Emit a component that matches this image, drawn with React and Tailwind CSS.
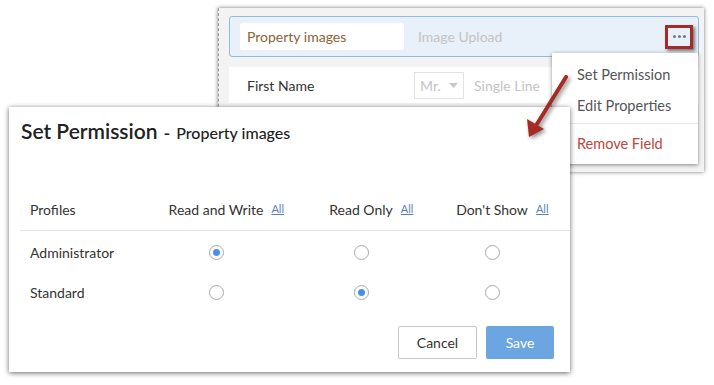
import React from "react";

const font = { fontFamily: "Lato, 'Open Sans', sans-serif" };

function Radio({ checked }) {
  return (
    <span className="w-[15px] h-[15px] rounded-full border border-[#a9a9a9] bg-white flex items-center justify-center">
      {checked && <span className="w-[7px] h-[7px] rounded-full bg-[#4a90e2]" />}
    </span>
  );
}

function ColHead({ label, width }) {
  return (
    <div className={`${width} flex justify-center`}>
      <span className="relative text-[14px] text-[#333]">
        {label}
        <a className="absolute left-full ml-[8px] top-[2px] text-[11px] text-[#5a7fc0] underline whitespace-nowrap">All</a>
      </span>
    </div>
  );
}

const rows = [
  { name: "Administrator", sel: 0 },
  { name: "Standard", sel: 1 },
];

const colW = ["w-[140px]", "w-[150px]", "w-[112px]"];

export default function App() {
  return (
    <div className="relative w-[714px] h-[385px] bg-white overflow-hidden" style={font}>
      {/* back panel: field list */}
      <div className="ml-[218px] mt-[8px] w-[486px] h-[164px] bg-[#f3f3f3] border-l border-dashed border-[#9a9a9a] shadow-[0_0_4px_rgba(0,0,0,0.55)] pl-[10px] pr-[5px] pt-[8px] flex flex-col gap-[10px]">
        <div className="h-[41px] rounded-[3px] border border-[#92b9e4] bg-[#e8f0f9] flex items-center pl-[10px] pr-[5px]">
          <div className="w-[164px] h-[27px] bg-white rounded-[2px] flex items-center pl-[7px] text-[14px] text-[#8a6337]">
            Property images
          </div>
          <span className="ml-[14px] text-[14px] text-[#c4c4c4]">Image Upload</span>
          <div className="ml-auto w-[28px] h-[24px] border-[3px] border-[#a52b27] shadow-[2px_2px_3px_rgba(0,0,0,0.5)] flex items-center justify-center gap-[2px]">
            <span className="w-[3px] h-[3px] rounded-full bg-[#777]" />
            <span className="w-[3px] h-[3px] rounded-full bg-[#777]" />
            <span className="w-[3px] h-[3px] rounded-full bg-[#777]" />
          </div>
        </div>
        <div className="h-[36px] bg-white flex items-center pl-[18px]">
          <span className="w-[167px] text-[14px] text-[#333]">First Name</span>
          <div className="w-[50px] h-[27px] border border-[#e3e3e3] flex items-center pl-[5px] gap-[8px] text-[14px] text-[#c4c4c4]">
            Mr.
            <svg width="9" height="5" viewBox="0 0 9 5"><path d="M0 0h9L4.5 5z" fill="#c8c8c8" /></svg>
          </div>
          <span className="ml-[10px] text-[14px] text-[#c4c4c4]">Single Line</span>
        </div>
      </div>

      {/* context menu */}
      <div className="absolute left-[552px] top-[53px] w-[146px] h-[111px] bg-white shadow-[0_1px_4px_rgba(0,0,0,0.45)] flex flex-col text-[14.5px]">
        <div className="h-[31px] mt-[6px] flex items-center pl-[25px] text-[#555]">Set Permission</div>
        <div className="h-[31px] flex items-center pl-[25px] text-[#555]">Edit Properties</div>
        <div className="mt-[2px] border-t border-[#e6e6e6]" />
        <div className="h-[40px] flex items-center pl-[25px] text-[#c0453a]">Remove Field</div>
      </div>

      {/* modal */}
      <div className="absolute left-[9px] top-[107px] w-[561px] h-[265px] bg-white shadow-[0_1px_5px_rgba(0,0,0,0.6)] flex flex-col">
        <div className="pl-[12px] pt-[8px] flex items-baseline text-[#222]">
          <span className="text-[21px] font-semibold">Set Permission</span>
          <span className="ml-[6px] text-[18px] font-semibold">-</span>
          <span className="ml-[6px] text-[16px] font-medium">Property images</span>
        </div>

        <div className="mt-[43px] ml-[11px] flex items-center h-[41px] border-b border-[#dfe4ea]">
          <div className="w-[126px] pl-[10px] text-[14px] text-[#333]">Profiles</div>
          <ColHead label="Read and Write" width={colW[0]} />
          <ColHead label="Read Only" width={colW[1]} />
          <ColHead label="Don't Show" width={colW[2]} />
        </div>

        <div className="ml-[11px] pt-[2px] flex flex-col">
          {rows.map((r) => (
            <div key={r.name} className="h-[40px] flex items-center">
              <div className="w-[126px] pl-[10px] text-[14px] text-[#333]">{r.name}</div>
              {colW.map((w, i) => (
                <div key={i} className={`${w} flex justify-center`}>
                  <Radio checked={r.sel === i} />
                </div>
              ))}
            </div>
          ))}
        </div>

        <div className="mt-auto mb-[13px] mr-[16px] flex justify-end gap-[9px]">
          <button className="w-[79px] h-[33px] border border-[#c9c9c9] rounded-[2px] bg-white text-[14px] text-[#333]">Cancel</button>
          <button className="w-[68px] h-[33px] rounded-[2px] bg-[#6ca6e0] text-[14px] text-white">Save</button>
        </div>
      </div>

      {/* pointer arrow */}
      <svg className="absolute left-0 top-0 pointer-events-none" width="714" height="385" style={{ filter: "drop-shadow(2px 2px 2px rgba(0,0,0,0.45))" }}>
        <line x1="566" y1="77" x2="537" y2="124" stroke="#a52b25" strokeWidth="4" strokeLinecap="round" />
        <polygon points="529,137 527,119 544,129" fill="#a52b25" />
      </svg>
    </div>
  );
}
